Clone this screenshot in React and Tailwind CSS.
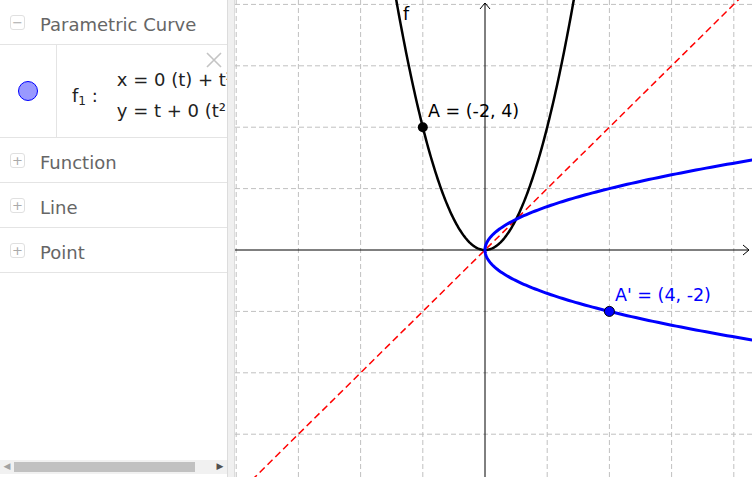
import React from 'react';

const UX = 31.1;
const UY = 30.7;
const OX = 250; // origin inside the svg (page x 486)
const OY = 250;
const W = 517;
const H = 477;

const sx = (x) => OX + x * UX;
const sy = (y) => OY - y * UY;

function pts(fn, from, to, steps = 200) {
  const out = [];
  for (let i = 0; i <= steps; i++) {
    const t = from + ((to - from) * i) / steps;
    const [x, y] = fn(t);
    out.push(`${sx(x).toFixed(2)},${sy(y).toFixed(2)}`);
  }
  return out.join(' ');
}

function Graph() {
  const vLines = [];
  for (let k = -4; k <= 8; k++) {
    const x = OX + k * 2 * UX;
    if (x < 0 || x > W || k === 0) continue;
    vLines.push(x);
  }
  const hLines = [];
  for (let k = -4; k <= 8; k++) {
    const y = OY + k * 2 * UY;
    if (y < 0 || y > H || k === 0) continue;
    hLines.push(y);
  }

  const parabola = pts((t) => [t, t * t], -2.95, 2.95);
  const sideways = pts((t) => [t * t, t], -3.1, 3.1);

  return (
    <svg width={W} height={H} viewBox={`0 0 ${W} ${H}`} className="block">
      {vLines.map((x) => (
        <line key={'v' + x} x1={x} y1={0} x2={x} y2={H} stroke="#c0c0c0" strokeWidth="1" strokeDasharray="5,3" />
      ))}
      {hLines.map((y) => (
        <line key={'h' + y} x1={0} y1={y} x2={W} y2={y} stroke="#c0c0c0" strokeWidth="1" strokeDasharray="5,3" />
      ))}

      {/* axes */}
      <line x1={0} y1={OY} x2={W - 3} y2={OY} stroke="#000" strokeWidth="1" />
      <polyline points={`${W - 9},${OY - 5} ${W - 3},${OY} ${W - 9},${OY + 5}`} fill="none" stroke="#000" strokeWidth="1" />
      <line x1={OX} y1={3} x2={OX} y2={H} stroke="#000" strokeWidth="1" />
      <polyline points={`${OX - 5},9 ${OX},3 ${OX + 5},9`} fill="none" stroke="#000" strokeWidth="1" />

      {/* y = x */}
      <line x1={sx(-8)} y1={sy(-8)} x2={sx(9)} y2={sy(9)} stroke="#ff0000" strokeWidth="1.5" strokeDasharray="7,4" />

      <polyline points={parabola} fill="none" stroke="#000" strokeWidth="2.5" strokeLinejoin="round" />
      <polyline points={sideways} fill="none" stroke="#0000ff" strokeWidth="3" strokeLinejoin="round" />

      <circle cx={sx(-2)} cy={sy(4)} r="5" fill="#000" />
      <circle cx={sx(4)} cy={sy(-2)} r="5" fill="#0000ff" stroke="#000" strokeWidth="1" />

      <g style={{ fontFamily: '"DejaVu Sans", sans-serif' }} fontSize="17.5">
        <text x={404 - 236} y={20} fill="#000">f</text>
        <text x={429 - 236} y={117} fill="#000">A = (-2, 4)</text>
        <text x={616 - 236} y={301} fill="#0000ff">A' = (4, -2)</text>
      </g>
    </svg>
  );
}

function ToggleBox({ sign }) {
  return (
    <div className="w-[15px] h-[15px] rounded-[3px] border border-[#e0e0e0] flex items-center justify-center text-[#aaa] text-[13px] leading-none shrink-0">
      {sign}
    </div>
  );
}

function GroupRow({ label, sign = '+' }) {
  return (
    <div className="flex items-center h-[45px] border-b border-[#e4e4e4] pl-[10px] gap-[15px]">
      <ToggleBox sign={sign} />
      <span className="text-[18px] text-[#666] pt-[5px]">{label}</span>
    </div>
  );
}

export default function App() {
  return (
    <div
      className="flex w-[753px] h-[477px] overflow-hidden bg-white"
      style={{ fontFamily: '"DejaVu Sans", sans-serif' }}
    >
      {/* Algebra view */}
      <div className="relative w-[228px] h-full border-r border-[#dcdcdc] overflow-hidden shrink-0">
        <div className="flex items-center h-[45px] border-b border-[#e4e4e4] pl-[10px] gap-[15px]">
          <ToggleBox sign="−" />
          <span className="text-[18px] text-[#666] pt-[5px]">Parametric Curve</span>
        </div>

        <div className="relative flex h-[93px] border-b border-[#e4e4e4]">
          <div className="w-[57px] border-r border-[#e4e4e4] flex items-center justify-center shrink-0">
            <div className="w-[20px] h-[20px] rounded-full bg-[#9999ff] border-[1.5px] border-[#0000ff]" />
          </div>
          <div className="flex items-center pl-[15px] pt-[8px] whitespace-nowrap text-[18px] text-[#222]">
            <span className="mr-[19px]">
              f<sub className="text-[12px]">1</sub> :
            </span>
            <div className="flex flex-col gap-[7px] leading-[24px]">
              <span>x = 0 (t) + t²</span>
              <span>y = t + 0 (t²)</span>
            </div>
          </div>
          <svg className="absolute left-[206px] top-[7px]" width="16" height="16" viewBox="0 0 16 16">
            <path d="M1 1 L15 15 M15 1 L1 15" stroke="#c4c4c4" strokeWidth="1.6" fill="none" />
          </svg>
        </div>

        <GroupRow label="Function" />
        <GroupRow label="Line" />
        <GroupRow label="Point" />

        {/* horizontal scrollbar */}
        <div className="absolute left-0 right-0 bottom-[3px] h-[14px] bg-[#f1f1f1] flex items-center">
          <span className="w-[14px] flex justify-center text-[#a3a3a3] text-[9px]">◀</span>
          <div className="h-[10px] w-[181px] bg-[#c1c1c1]" />
          <div className="flex-1" />
          <span className="w-[14px] flex justify-center text-[#505050] text-[9px]">▶</span>
        </div>
      </div>

      {/* splitter */}
      <div className="w-[7px] h-full bg-[#f0f0f0] border-r border-[#dcdcdc] shrink-0" />

      {/* graphics view */}
      <div className="flex-1 h-full overflow-hidden">
        <Graph />
      </div>
    </div>
  );
}
